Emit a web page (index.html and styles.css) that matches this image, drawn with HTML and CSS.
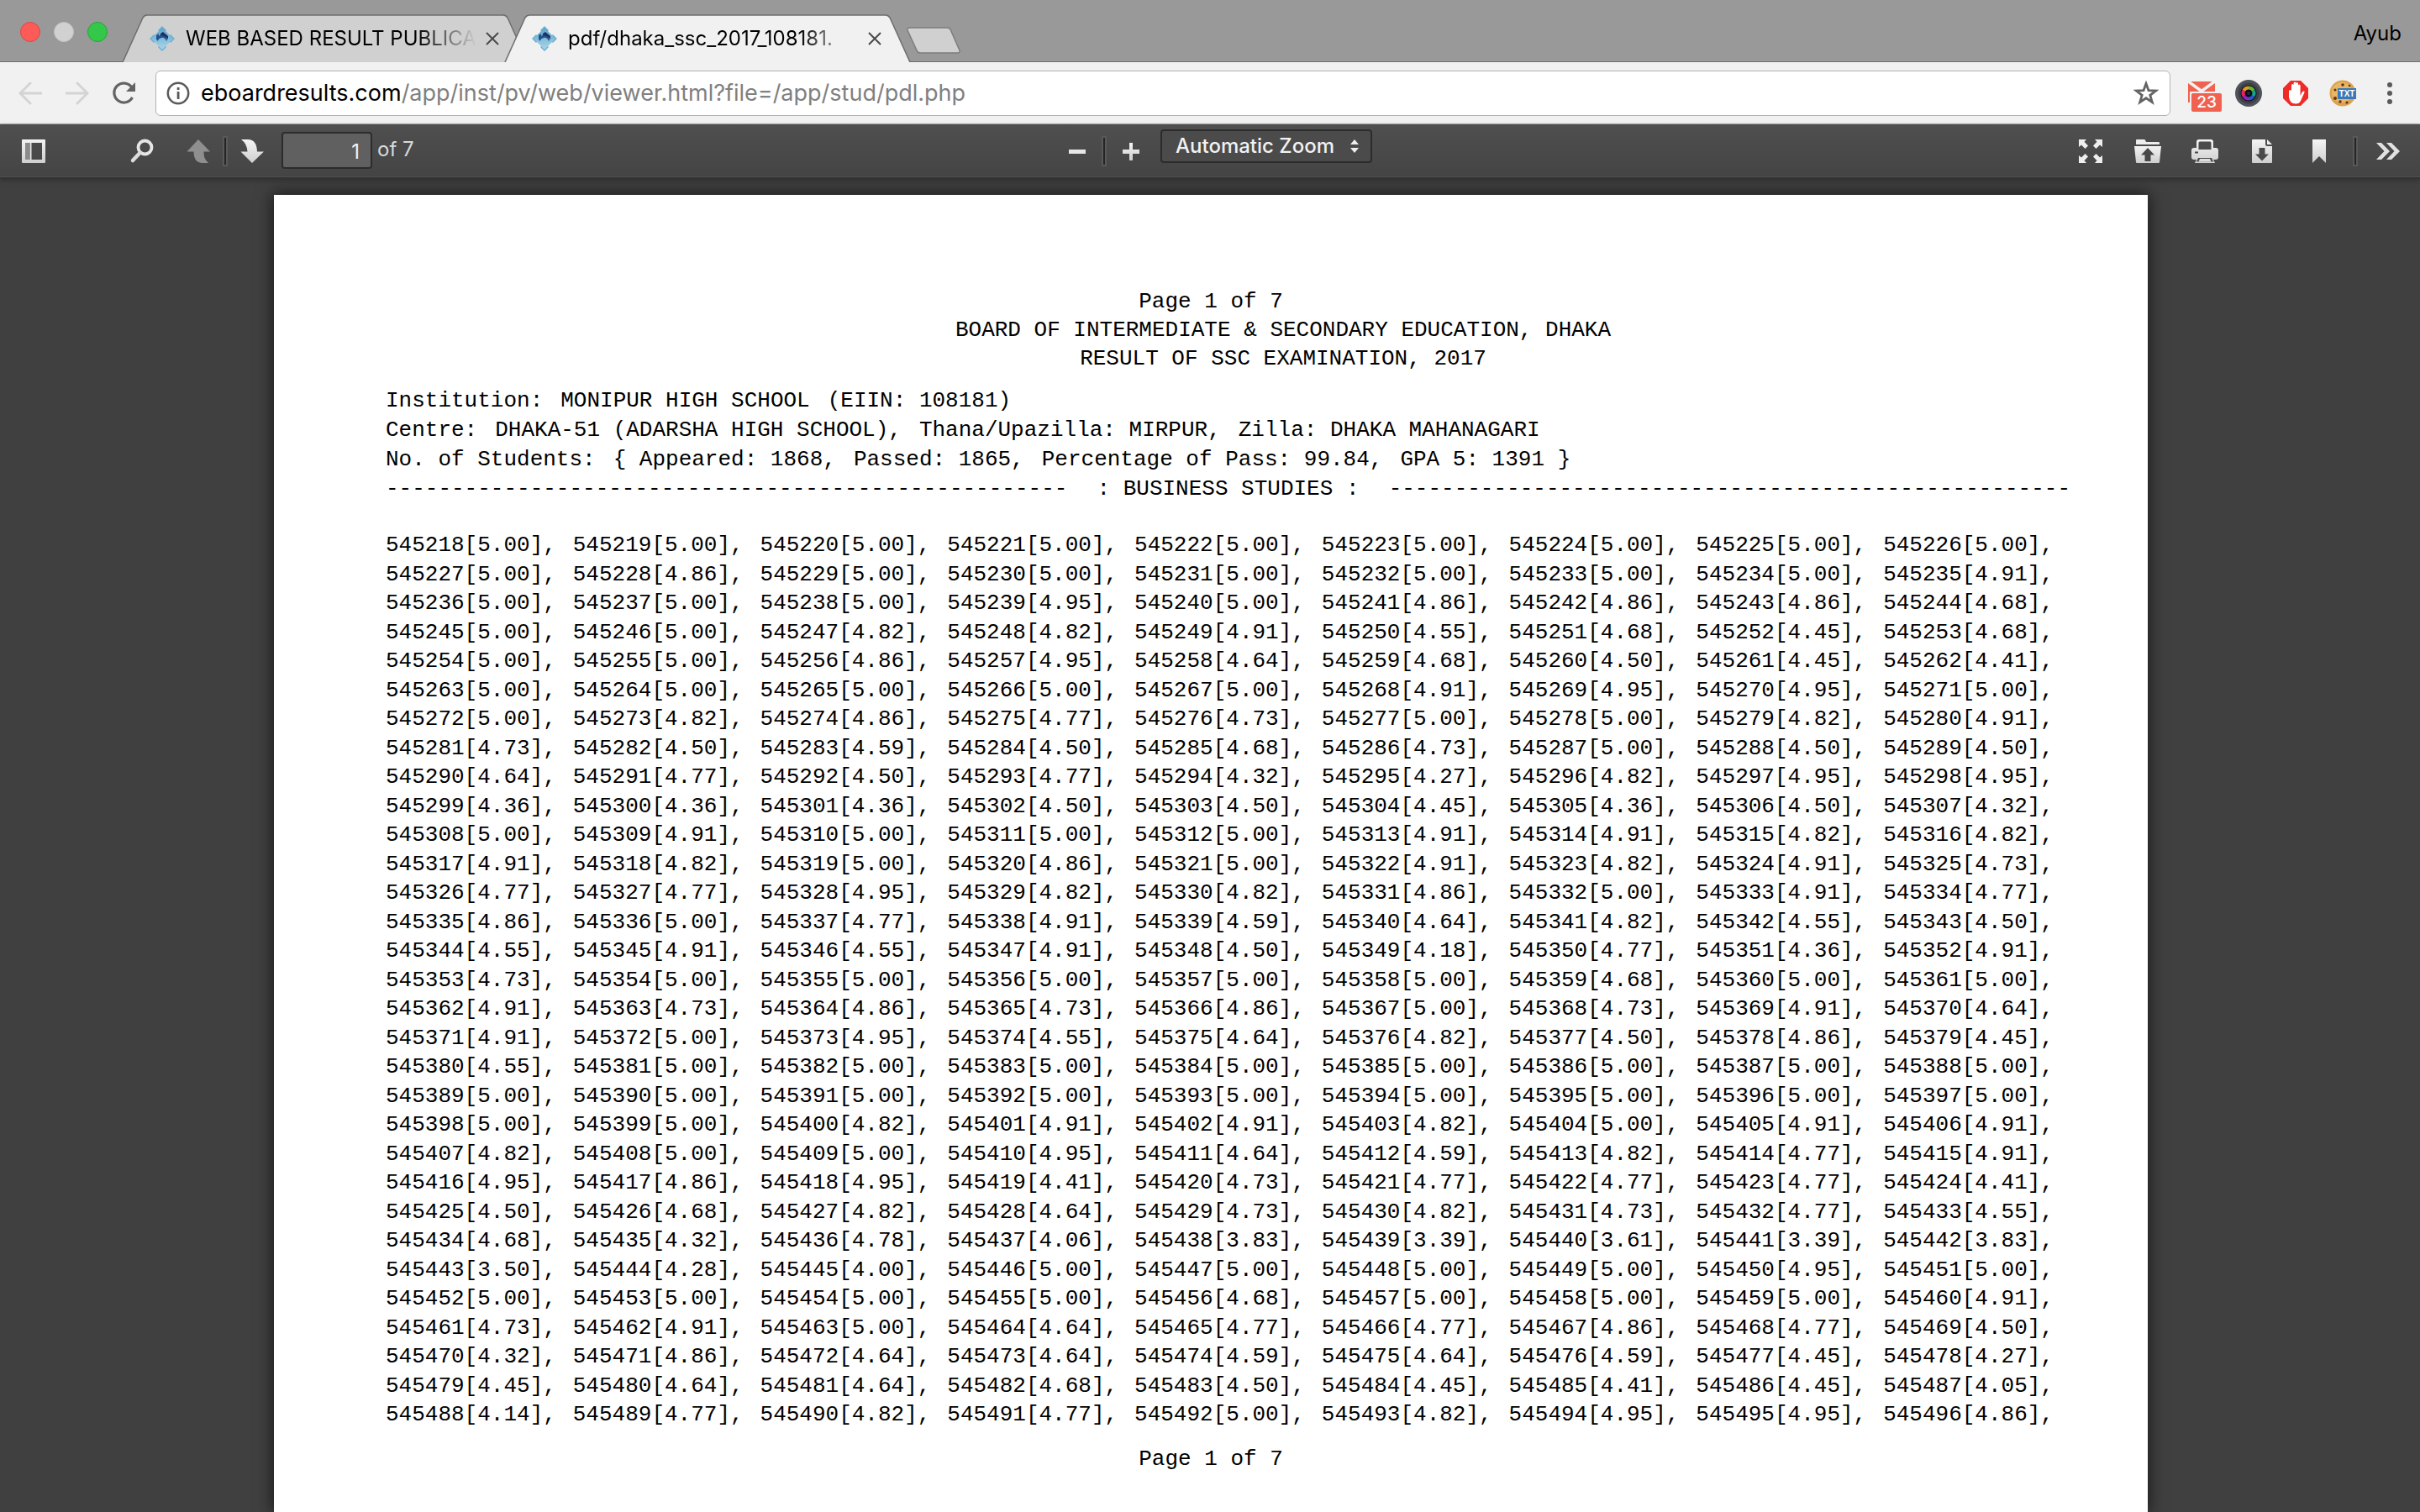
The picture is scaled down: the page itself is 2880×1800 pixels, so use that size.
FILE: index.html
```html
<!DOCTYPE html>
<html lang="en">
<head>
<meta charset="utf-8">
<title>pdf/dhaka_ssc_2017_108181.pdf</title>
<link rel="stylesheet" href="styles.css">
</head>
<body>
<svg class="defs" width="0" height="0" aria-hidden="true">
  <defs>
    <linearGradient id="metal" x1="0" y1="0" x2="0" y2="1"><stop offset="0" stop-color="#f4f4f4"/><stop offset="1" stop-color="#cfcfcf"/></linearGradient>
    <linearGradient id="sky" x1="0" y1="0" x2="0" y2="1"><stop offset="0" stop-color="#5fa3c8"/><stop offset="1" stop-color="#a9d6e8"/></linearGradient>
    <symbol id="favicon" viewBox="0 0 32 32">
      <path d="M16 1l5 5-5 5-5-5zM6 11l5 5-5 5-5-5zM26 11l5 5-5 5-5-5zM16 21l5 5-5 5-5-5z" fill="#6cb0d2"/>
      <path d="M16 3l13 13-13 13L3 16z" fill="url(#sky)"/>
      <path d="M9 12l3-2v3q4-4 8-1l2 5-1 2q-2-5-6-4-4 1-4 4l-2-2z" fill="#23518f"/>
      <path d="M14 10l3-2 6 5v4q-3-5-9-5z" fill="#1d2f63"/>
    </symbol>
  </defs>
</svg>

<header class="tabstrip">
  <div class="lights"><button class="light red" aria-label="Close"></button><button class="light idle" aria-label="Minimise"></button><button class="light green" aria-label="Zoom"></button></div>
  <nav class="tabs">
    <div class="tab">
      <svg class="tab-shape" viewBox="0 0 484 57" preserveAspectRatio="none"><path d="M1 57L25 4Q27 1 30 1H454Q457 1 459 4L483 57" fill="#d0d0d0" stroke="#6d6d6d" stroke-width="1.5"/></svg>
      <svg class="favicon"><use href="#favicon"/></svg>
      <span class="tab-title">WEB BASED RESULT PUBLICAT</span>
      <button class="close" aria-label="Close tab"><svg viewBox="0 0 16 16"><path d="M1 1l14 14M15 1L1 15"/></svg></button>
    </div>
    <div class="tab active">
      <svg class="tab-shape" viewBox="0 0 484 57" preserveAspectRatio="none"><path d="M1 57L25 4Q27 1 30 1H454Q457 1 459 4L483 57" fill="#f1f1f1" stroke="#6d6d6d" stroke-width="1.5"/></svg>
      <svg class="favicon"><use href="#favicon"/></svg>
      <span class="tab-title">pdf/dhaka_ssc_2017_108181.</span>
      <button class="close" aria-label="Close tab"><svg viewBox="0 0 16 16"><path d="M1 1l14 14M15 1L1 15"/></svg></button>
    </div>
    <button class="newtab" aria-label="New tab"><svg viewBox="0 0 66 32"><path d="M5 1H49Q52 1 53 3L64 28Q65 31 61 31H17Q14 31 13 28L2 4Q1 1 5 1z" fill="#d0d0d0" stroke="#7c7c7c" stroke-width="1.5"/></svg></button>
  </nav>
  <button class="profile">Ayub</button>
</header>

<div class="addressbar">
  <button class="nav" aria-label="Back"><svg width="28" height="28" viewBox="0 0 28 28" class="dim"><path d="M27 14H2M14 2L2 14l12 12"/></svg></button>
  <button class="nav" aria-label="Forward"><svg width="28" height="28" viewBox="0 0 28 28" class="dim"><path d="M1 14h25M14 2l12 12-12 12"/></svg></button>
  <button class="nav" aria-label="Reload"><svg width="28" height="28" viewBox="0 0 28 28"><path d="M23.500 19A11.500 11.500 0 1 1 22.500 6.500" fill="none" stroke="#636363" stroke-width="3.200"/><path d="M27 1v11H16z" fill="#636363"/></svg></button>
  <div class="omnibox">
    <svg width="28" height="28" viewBox="0 0 28 28"><circle cx="14" cy="14" r="12.200" fill="none" stroke="#5a5a5a" stroke-width="2.500"/><path d="M12.700 7h2.800v3h-2.800zM12.700 12h2.800v9h-2.800z" fill="#5a5a5a"/></svg>
    <a class="url" href="#document"><span class="host">eboardresults.com</span>/app/inst/pv/web/viewer.html?file=/app/stud/pdl.php</a>
    <button class="star" aria-label="Bookmark this page"><svg width="30" height="30" viewBox="0 0 30 30"><path d="M15 3.500l3 8.200 8.700.3-6.900 5.300 2.500 8.400-7.300-4.900-7.300 4.900 2.500-8.400L3.300 12l8.700-.3z" fill="none" stroke="#636363" stroke-width="2.800"/></svg></button>
  </div>
  <div class="extensions">
    <button class="ext mail" aria-label="Mail"><svg width="42" height="40" viewBox="0 0 42 40"><path d="M0 2H32V27H0z" fill="#f0624f"/><path d="M-1 1L16 13.500 33 1" fill="none" stroke="#f1f1f1" stroke-width="3.500"/><rect x="2" y="14" width="40" height="26" fill="#f1f1f1"/><rect x="4" y="16" width="36" height="22" rx="2" fill="#f0624f"/></svg><span class="badge">23</span></button>
    <button class="ext" aria-label="Camera"><svg width="32" height="32" viewBox="0 0 32 32"><circle cx="16" cy="16" r="16" fill="#50535a"/><circle cx="16" cy="16" r="12.500" fill="#3d4046"/><circle cx="16" cy="16" r="9.500" fill="#0b0b10"/><g fill="none" stroke-width="4"><path d="M16 9.500a6.500 6.500 0 0 1 5.600 3.200" stroke="#6ab52b"/><path d="M21.600 12.700a6.500 6.500 0 0 1 0 6.600" stroke="#17a48d"/><path d="M21.600 19.300a6.500 6.500 0 0 1-5.600 3.200" stroke="#2a55c8"/><path d="M16 22.500a6.500 6.500 0 0 1-5.600-3.200" stroke="#9423c0"/><path d="M10.400 19.300a6.500 6.500 0 0 1 0-6.600" stroke="#e02468"/><path d="M10.400 12.700A6.500 6.500 0 0 1 16 9.500" stroke="#e39a22"/></g><circle cx="16" cy="16" r="2" fill="#1c2f45"/></svg></button>
    <button class="ext" aria-label="Ad blocker"><svg width="32" height="32" viewBox="0 0 32 32"><path d="M10 1H22L31 10V22L22 31H10L1 22V10z" fill="#ee2b29"/><path d="M8 14q0-2 1.500-2T11 14V6.500q0-1.500 1.300-1.500t1.300 1.500V13V4q0-1.500 1.400-1.500T16.400 4v9V4.500q0-1.500 1.300-1.500T19 4.500V14V7q0-1.500 1.300-1.500T21.600 7v12l2-4q1-2 2.500-1.500.8.500.2 2L22 25q-1.500 3.500-6 3.500-7 0-8-8z" fill="#fff"/></svg></button>
    <button class="ext" aria-label="Cookies to text"><svg width="32" height="32" viewBox="0 0 32 32"><circle cx="16" cy="16" r="15.500" fill="#dda24e"/><circle cx="15" cy="15" r="12" fill="#e9b764"/><g fill="#5c3418"><circle cx="16" cy="6" r="1.800"/><circle cx="7" cy="12" r="1.600"/><circle cx="7" cy="22" r="2"/><circle cx="13" cy="26" r="1.700"/><circle cx="21" cy="27" r="1.600"/><circle cx="24" cy="7" r="1.300"/></g><rect x="10" y="10" width="22" height="13" fill="#3b78b8"/><text x="21" y="20" text-anchor="middle" class="txt">TXT</text></svg></button>
    <button class="ext" aria-label="Menu"><svg width="32" height="32" viewBox="0 0 32 32"><g fill="#5a5a5a"><circle cx="16" cy="6" r="3"/><circle cx="16" cy="16" r="3"/><circle cx="16" cy="26" r="3"/></g></svg></button>
  </div>
</div>

<div class="toolbar">
  <div class="group">
    <button class="tool" aria-label="Toggle sidebar"><svg viewBox="0 0 32 32"><path fill-rule="evenodd" d="M3 2H29Q30 2 30 3V29Q30 30 29 30H3Q2 30 2 29V3Q2 2 3 2zM6 6V26H26V6z" fill="url(#metal)"/><path d="M6 6h5v20H6z" fill="#8b8b8b"/><path d="M11.500 6h2v20h-2z" fill="#e4e4e4"/></svg></button>
    <button class="tool find" aria-label="Find"><svg viewBox="0 0 32 32"><circle cx="19.500" cy="11.500" r="8" fill="none" stroke="#e6e6e6" stroke-width="3.800"/><path d="M13.500 18L5 27" stroke="#dcdcdc" stroke-width="4.500" stroke-linecap="round"/></svg></button>
    <div class="pair">
      <button class="tool slim" aria-label="Previous page"><svg viewBox="0 0 32 32"><path d="M16 2L30 16.500H22.500Q22 25 28 30H20Q10.500 29 10.500 16.500H2.500z" fill="#8f8f8f"/></svg></button>
      <span class="sep"></span>
      <button class="tool slim" aria-label="Next page"><svg viewBox="0 0 32 32"><path d="M16 30L30 16.500H22Q21.500 2 11 2H3Q10 7 10.500 16.500H2.500z" fill="url(#metal)"/></svg></button>
    </div>
    <input class="page-number" id="page" type="text" value="1"><label class="of" for="page">of 7</label>
  </div>
  <div class="group zoom">
    <div class="pair">
      <button class="tool slim" aria-label="Zoom out"><svg viewBox="0 0 32 32"><path d="M6 14h20v5H6z" fill="#e6e6e6"/></svg></button>
      <span class="sep"></span>
      <button class="tool slim" aria-label="Zoom in"><svg viewBox="0 0 32 32"><path d="M14 6h4v8h8v5h-8v8h-4v-8H6v-5h8z" fill="url(#metal)"/></svg></button>
    </div>
    <div class="select-wrap">
      <select aria-label="Zoom"><option>Automatic Zoom</option></select>
      <svg class="updown" width="10" height="16" viewBox="0 0 10 16"><path d="M5 0l5 6H0zM5 16l5-6H0z" fill="#eee"/></svg>
    </div>
  </div>
  <div class="group end">
    <button class="tool" aria-label="Presentation mode"><svg viewBox="0 0 32 32"><path id="corner" d="M2 2H11L8.500 4.800 13 9.500 9.500 13 5 8.500 2 11z" fill="#eee"/><use href="#corner" transform="matrix(-1 0 0 1 32 0)"/><use href="#corner" transform="matrix(1 0 0 -1 0 32)"/><use href="#corner" transform="matrix(-1 0 0 -1 32 32)"/></svg></button>
    <button class="tool" aria-label="Open file"><svg viewBox="0 0 32 32"><path d="M2 8V3Q2 2 3 2H12Q13 2 14 5H29Q30 5 30 6V8z" fill="#eee"/><path fill-rule="evenodd" d="M0 10H32L30 29Q30 30 29 30H3Q2 30 2 29zM16 12L8 20.500H12.500V28H19.500V20.500H24z" fill="url(#metal)"/></svg></button>
    <button class="tool" aria-label="Print"><svg viewBox="0 0 32 32"><path fill-rule="evenodd" d="M9 2H23Q26 2 26 5V12H29Q32 12 32 15V23Q32 26 29 26H26L28 30H4L6 26H3Q0 26 0 23V15Q0 12 3 12H6V5Q6 2 9 2zM10 4.500Q8.500 4.500 8.500 6V14H23.500V6Q23.500 4.500 22 4.500zM4 16.500V18.500H8V16.500zM8 24L6 28.500H26L24 24z" fill="url(#metal)"/><path d="M10 25h12l1.500 3.500h-15z" fill="#ddd"/></svg></button>
    <button class="tool" aria-label="Download"><svg viewBox="0 0 32 32"><path fill-rule="evenodd" d="M5 2H20V8Q20 10 22 10H28V29Q28 30 27 30H5Q4 30 4 29V3Q4 2 5 2zM12.500 12V19.500H8L16 27.500 24 19.500H19.500V12z" fill="url(#metal)"/><path d="M22 2l6 6h-6z" fill="#eee"/></svg></button>
    <button class="tool" aria-label="Current view"><svg viewBox="0 0 32 32"><path d="M8 2H24V30L16 22 8 30z" fill="url(#metal)"/></svg></button>
    <span class="sep wide"></span>
    <button class="tool" aria-label="Tools"><svg viewBox="0 0 32 32"><path id="chev" d="M2 6H8L18 16 8 26H2L11.500 16z" fill="#e2e2e2"/><use href="#chev" x="12"/></svg></button>
  </div>
</div>

<main class="viewer">
  <article class="page" id="document">
    <p class="folio">Page 1 of 7</p>
    <div class="title">
      <h1>BOARD OF INTERMEDIATE &amp; SECONDARY EDUCATION, DHAKA</h1>
      <h2>RESULT OF SSC EXAMINATION, 2017</h2>
    </div>
    <div class="meta">
      <p><span>Institution:</span><span>MONIPUR HIGH SCHOOL</span><span>(EIIN: 108181)</span></p>
      <p><span>Centre:</span><span>DHAKA-51 (ADARSHA HIGH SCHOOL),</span><span>Thana/Upazilla: MIRPUR,</span><span>Zilla: DHAKA MAHANAGARI</span></p>
      <p><span>No. of Students:</span><span>{ Appeared: 1868,</span><span>Passed: 1865,</span><span>Percentage of Pass: 99.84,</span><span>GPA 5: 1391 }</span></p>
    </div>
    <p class="section"><span>----------------------------------------------------</span><span>: BUSINESS STUDIES :</span><span>----------------------------------------------------</span></p>
    <table class="results"><tbody id="results"></tbody></table>
    <p class="folio foot">Page 1 of 7</p>
  </article>
</main>
<script src="results.js"></script>
</body>
</html>
```
FILE: styles.css
```css
* { box-sizing: border-box; }
body { margin: 0; height: 100vh; display: flex; flex-direction: column; overflow: hidden; background: #404040; font-family: Inter, "Liberation Sans", sans-serif; font-size: 24px; color: #000; }
button { border: 0; padding: 0; margin: 0; background: none; font: inherit; color: inherit; display: flex; align-items: center; justify-content: center; }
p, h1, h2 { margin: 0; font: inherit; }
svg { display: block; flex: none; }
.defs { position: absolute; }

/* window frame and tabs */
.tabstrip { height: 74px; flex: none; display: flex; align-items: flex-end; background: #999; border-bottom: 1px solid #6d6d6d; padding-right: 22px; }
.lights { display: flex; gap: 16px; padding: 0 17px 0 24px; align-self: flex-start; margin-top: 26px; }
.light { width: 24px; height: 24px; border-radius: 50%; }
.red { background: #fc5b57; border: 1px solid #df4744; }
.idle { background: #d1d1d1; border: 1px solid #c2c2c2; }
.green { background: #34c84a; border: 1px solid #24a732; }
.tabs { display: flex; align-items: flex-end; flex: 1; margin-bottom: -1px; }
.tab { position: relative; isolation: isolate; width: 484px; height: 57px; display: flex; align-items: center; padding: 0 35px 0 32px; margin-right: -29px; }
.tab.active { z-index: 1; margin-right: -6px; }
.tab-shape { position: absolute; left: 0; top: 0; width: 100%; height: 100%; z-index: -1; }
.favicon { width: 32px; height: 32px; }
.tab-title { flex: 1; min-width: 0; margin: 0 0 0 12px; white-space: nowrap; -webkit-mask-image: linear-gradient(to right, #000 77%, transparent 97%); mask-image: linear-gradient(to right, #000 77%, transparent 97%); }
.close svg { width: 16px; height: 16px; fill: none; stroke: #4a4a4a; stroke-width: 2; }
.newtab { margin-bottom: 10px; }
.newtab svg { width: 66px; height: 32px; }
.profile { align-self: flex-start; margin-top: 24px; line-height: 32px; }

/* address bar */
.addressbar { height: 74px; flex: none; display: flex; align-items: center; background: #f1f1f1; border-bottom: 1px solid #b0b0b0; padding: 0 20px 0 8px; }
.nav { width: 56px; height: 56px; }
.dim { fill: none; stroke: #d4d4d4; stroke-width: 3; stroke-linecap: round; }
.omnibox { flex: 1; height: 54px; margin-left: 9px; display: flex; align-items: center; background: #fff; border: 1px solid #b3b3b3; border-radius: 6px; padding: 0 13px 0 12px; }
.url { flex: 1; margin-left: 13px; font-size: 27px; color: #808080; text-decoration: none; white-space: nowrap; }
.host { color: #000; }
.extensions { display: flex; gap: 24px; margin-left: 21px; }
.ext { width: 32px; height: 32px; position: relative; }
.mail { justify-content: flex-start; align-items: flex-start; }
.badge { position: absolute; left: 4px; top: 16px; width: 36px; height: 22px; line-height: 22px; text-align: center; font-size: 19px; font-weight: 500; color: #fff; }
.txt { font: bold 10px "Liberation Sans", sans-serif; fill: #fff; }

/* viewer toolbar */
.toolbar { height: 65px; flex: none; display: grid; grid-template-columns: 1fr auto 1fr; align-items: center; padding: 0 6px 0 8px; color: #e0e0e0; background: linear-gradient(#4f4f4f, #444); border-bottom: 2px solid #333; box-shadow: inset 0 -1px 0 #505050, 0 2px 6px rgba(0,0,0,.25); position: relative; z-index: 1; }
.group { display: flex; align-items: center; }
.end { justify-content: flex-end; gap: 4px; }
.zoom { padding-left: 4px; }
.pair { display: flex; align-items: center; }
.tool { width: 64px; height: 50px; }
.tool.slim { width: 58px; }
.tool svg { width: 32px; height: 32px; }
.find { margin: 0 6px 0 65px; }
.sep { width: 6px; height: 36px; background: #252525; border: 2px solid #585858; }
.sep.wide { margin: 0 0 0 4px; }
.page-number { width: 108px; height: 44px; margin: 0 6px 2px; padding: 4px 13px 0; text-align: right; font: 24px Inter, sans-serif; color: #f2f2f2; background: #606060; border: 2px solid #2c2c2c; border-radius: 4px; }
.of { color: #d9d9d9; padding-bottom: 4px; }
.select-wrap { display: flex; align-items: center; margin: -12px 0 0 6px; position: relative; }
.select-wrap select { appearance: none; width: 252px; height: 40px; padding: 0 16px; font: 500 24px Inter, sans-serif; color: #f2f2f2; background: #4b4b4b; border: 2px solid #2c2c2c; border-radius: 4px; }
.updown { position: absolute; right: 16px; top: 12px; }

/* document */
.viewer { flex: 1; overflow: hidden; padding: 19px 324px 0 326px; background: #404040; }
.page { height: 100%; background: #fff; box-shadow: 0 0 18px 2px rgba(0,0,0,.6); padding: 110px 92px 0 133px; font-family: "Liberation Mono", monospace; font-size: 26px; line-height: 35px; white-space: nowrap; }
.folio { text-align: center; margin-right: 41px; line-height: 34px; }
.title { text-align: center; line-height: 34px; margin: 0 0 16px 131px; }
.meta p { display: flex; gap: 21px; }
.section { display: flex; justify-content: space-between; }
.results { width: 100%; table-layout: fixed; border-collapse: collapse; margin-top: 32px; line-height: 34px; }
.results td { padding: 0; height: 34px; }
.results tr:nth-child(even) td { height: 35px; }
.foot { margin-top: 19px; }
```
FILE: results.js
```js
// Grade points in roll-number order, nine to a printed line.
const firstRoll = 545218;
const lines = `
5.00 5.00 5.00 5.00 5.00 5.00 5.00 5.00 5.00
5.00 4.86 5.00 5.00 5.00 5.00 5.00 5.00 4.91
5.00 5.00 5.00 4.95 5.00 4.86 4.86 4.86 4.68
5.00 5.00 4.82 4.82 4.91 4.55 4.68 4.45 4.68
5.00 5.00 4.86 4.95 4.64 4.68 4.50 4.45 4.41
5.00 5.00 5.00 5.00 5.00 4.91 4.95 4.95 5.00
5.00 4.82 4.86 4.77 4.73 5.00 5.00 4.82 4.91
4.73 4.50 4.59 4.50 4.68 4.73 5.00 4.50 4.50
4.64 4.77 4.50 4.77 4.32 4.27 4.82 4.95 4.95
4.36 4.36 4.36 4.50 4.50 4.45 4.36 4.50 4.32
5.00 4.91 5.00 5.00 5.00 4.91 4.91 4.82 4.82
4.91 4.82 5.00 4.86 5.00 4.91 4.82 4.91 4.73
4.77 4.77 4.95 4.82 4.82 4.86 5.00 4.91 4.77
4.86 5.00 4.77 4.91 4.59 4.64 4.82 4.55 4.50
4.55 4.91 4.55 4.91 4.50 4.18 4.77 4.36 4.91
4.73 5.00 5.00 5.00 5.00 5.00 4.68 5.00 5.00
4.91 4.73 4.86 4.73 4.86 5.00 4.73 4.91 4.64
4.91 5.00 4.95 4.55 4.64 4.82 4.50 4.86 4.45
4.55 5.00 5.00 5.00 5.00 5.00 5.00 5.00 5.00
5.00 5.00 5.00 5.00 5.00 5.00 5.00 5.00 5.00
5.00 5.00 4.82 4.91 4.91 4.82 5.00 4.91 4.91
4.82 5.00 5.00 4.95 4.64 4.59 4.82 4.77 4.91
4.95 4.86 4.95 4.41 4.73 4.77 4.77 4.77 4.41
4.50 4.68 4.82 4.64 4.73 4.82 4.73 4.77 4.55
4.68 4.32 4.78 4.06 3.83 3.39 3.61 3.39 3.83
3.50 4.28 4.00 5.00 5.00 5.00 5.00 4.95 5.00
5.00 5.00 5.00 5.00 4.68 5.00 5.00 5.00 4.91
4.73 4.91 5.00 4.64 4.77 4.77 4.86 4.77 4.50
4.32 4.86 4.64 4.64 4.59 4.64 4.59 4.45 4.27
4.45 4.64 4.64 4.68 4.50 4.45 4.41 4.45 4.05
4.14 4.77 4.82 4.77 5.00 4.82 4.95 4.95 4.86
`.trim().split("\n");

const body = document.getElementById("results");
let roll = firstRoll;
for (const line of lines) {
  const row = body.insertRow();
  for (const grade of line.split(" ")) {
    row.insertCell().textContent = `${roll}[${grade}],`;
    roll += 1;
  }
}
```
